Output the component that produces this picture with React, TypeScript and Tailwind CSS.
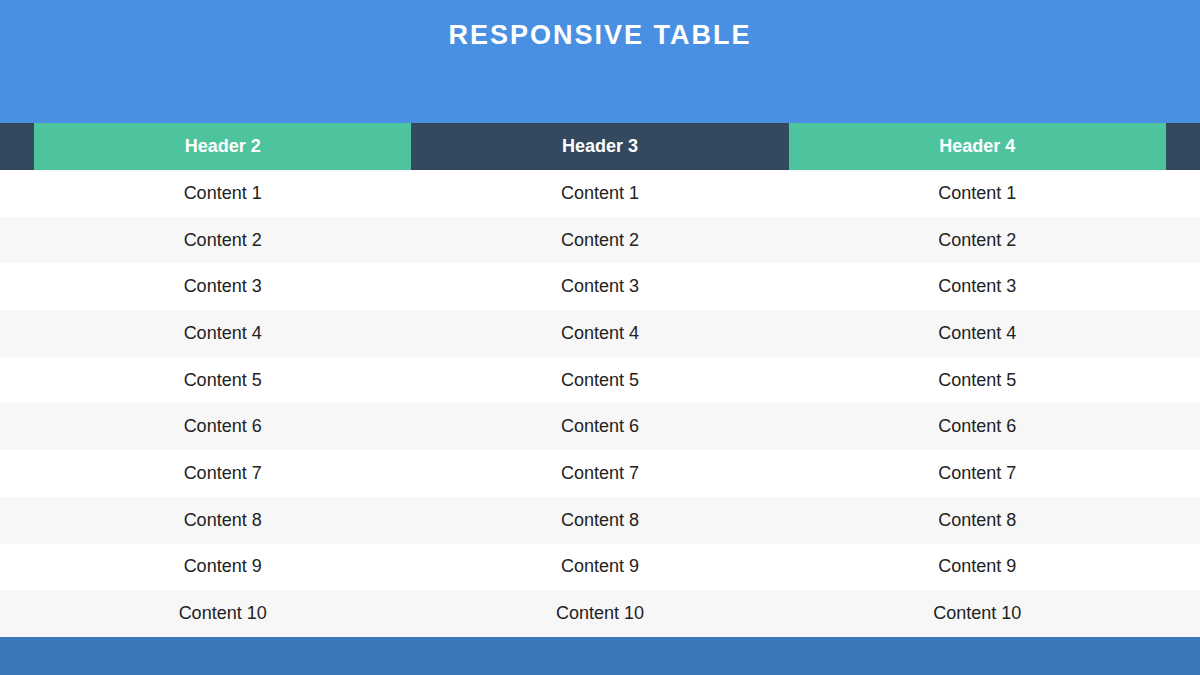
import React from "react";

const rows = Array.from({ length: 10 }, (_, i) => i + 1);

export default function App() {
  return (
    <div
      className="w-[1200px] h-[675px] overflow-hidden flex flex-col bg-white"
      style={{ fontFamily: '"Liberation Sans", Arial, sans-serif' }}
    >
      <div className="h-[123px] bg-[#4a90e2] flex justify-center pt-[18px]">
        <h1 className="text-[27px] leading-[34px] font-bold tracking-[2px] text-white h-fit">
          RESPONSIVE TABLE
        </h1>
      </div>
      <div className="h-[47px] flex text-white font-bold text-[18px]">
        <div className="w-[34px] bg-[#34495e]" />
        <div className="flex-1 bg-[#4ec49e] flex items-center justify-center">Header 2</div>
        <div className="flex-1 bg-[#34495e] flex items-center justify-center">Header 3</div>
        <div className="flex-1 bg-[#4ec49e] flex items-center justify-center">Header 4</div>
        <div className="w-[34px] bg-[#34495e]" />
      </div>
      <div className="flex flex-col">
        {rows.map((n) => (
          <div
            key={n}
            className={`h-[46.7px] flex text-[18px] text-[#222222] ${n % 2 === 0 ? "bg-[#f7f7f7]" : "bg-white"}`}
          >
            <div className="w-[34px]" />
            <div className="flex-1 flex items-center justify-center">Content {n}</div>
            <div className="flex-1 flex items-center justify-center">Content {n}</div>
            <div className="flex-1 flex items-center justify-center">Content {n}</div>
            <div className="w-[34px]" />
          </div>
        ))}
      </div>
      <div className="flex-1 bg-[#3a78b9]" />
    </div>
  );
}
